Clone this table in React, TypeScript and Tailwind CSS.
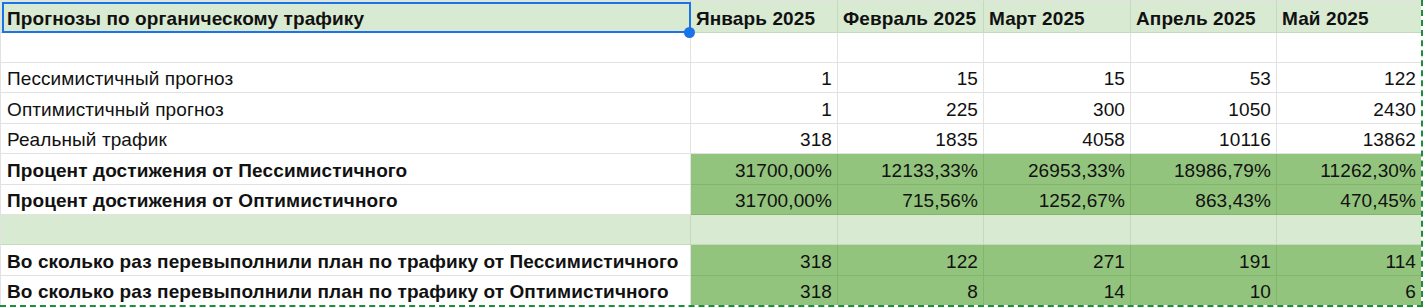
const MONTHS = ["Январь 2025", "Февраль 2025", "Март 2025", "Апрель 2025", "Май 2025"];

type Row = {
  label: string;
  values: string[];
  kind: "header" | "blank" | "plain" | "green" | "light";
  h: string;
};

const ROWS: Row[] = [
  { label: "Прогнозы по органическому трафику", values: MONTHS, kind: "header", h: "h-[33px]" },
  { label: "", values: ["", "", "", "", ""], kind: "blank", h: "h-[30px]" },
  { label: "Пессимистичный прогноз", values: ["1", "15", "15", "53", "122"], kind: "plain", h: "h-[30px]" },
  { label: "Оптимистичный прогноз", values: ["1", "225", "300", "1050", "2430"], kind: "plain", h: "h-[31px]" },
  { label: "Реальный трафик", values: ["318", "1835", "4058", "10116", "13862"], kind: "plain", h: "h-[30px]" },
  {
    label: "Процент достижения от Пессимистичного",
    values: ["31700,00%", "12133,33%", "26953,33%", "18986,79%", "11262,30%"],
    kind: "green",
    h: "h-[31px]",
  },
  {
    label: "Процент достижения от Оптимистичного",
    values: ["31700,00%", "715,56%", "1252,67%", "863,43%", "470,45%"],
    kind: "green",
    h: "h-[30px]",
  },
  { label: "", values: ["", "", "", "", ""], kind: "light", h: "h-[30px]" },
  {
    label: "Во сколько раз перевыполнили план по трафику от Пессимистичного",
    values: ["318", "122", "271", "191", "114"],
    kind: "green",
    h: "h-[31px]",
  },
  {
    label: "Во сколько раз перевыполнили план по трафику от Оптимистичного",
    values: ["318", "8", "14", "10", "6"],
    kind: "green",
    h: "h-[29px]",
  },
];

function labelCell(row: Row, last: boolean) {
  const bg =
    row.kind === "header" || row.kind === "light" ? "bg-[#d9ead3] border-[#c5d9be]" : "bg-white border-[#e2e2e2]";
  const bold = row.kind === "header" || row.kind === "green" ? "font-bold" : "";
  const top = row.kind === "header" ? "border-t border-t-[#e2e2e2]" : "";
  return (
    <div
      className={`${row.h} ${bg} ${bold} ${top} border-l border-l-[#e2e2e2] border-r ${
        last ? "" : "border-b"
      } flex items-end pl-[6px] pb-[3px] whitespace-nowrap overflow-hidden`}
    >
      {row.label}
    </div>
  );
}

function valueCell(row: Row, v: string, i: number, last: boolean) {
  const lastCol = i === 4;
  let bg = "bg-white border-[#e2e2e2]";
  if (row.kind === "header" || row.kind === "light") bg = "bg-[#d9ead3] border-[#c5d9be]";
  if (row.kind === "green") bg = "bg-[#93c47d] border-[#84b56f]";
  const top = row.kind === "header" ? "border-t border-t-[#e2e2e2]" : "";
  const align = row.kind === "header" ? "justify-start pl-[5px] font-bold" : "justify-end pr-[5px]";
  return (
    <div
      key={i}
      className={`${row.h} ${bg} ${top} ${lastCol ? "" : "border-r"} ${
        last ? "" : "border-b"
      } flex items-end pb-[3px] ${align} whitespace-nowrap overflow-hidden`}
    >
      {v}
    </div>
  );
}

export default function App() {
  return (
    <div className="w-[1425px] h-[308px] bg-white relative font-['Liberation_Sans',Arial,sans-serif] text-[19px] leading-[20px] tracking-[0.1px] text-[#111]">
      <div className="w-[1423px] grid grid-cols-[691px_147px_146px_147px_146px_144px] border-r-2 border-b-2 border-dashed border-[#1e8e3e]">
        {ROWS.map((row, r) => {
          const last = r === ROWS.length - 1;
          return [
            <div key={`l${r}`} className="contents">
              {labelCell(row, last)}
            </div>,
            ...row.values.map((v, i) => (
              <div key={`v${r}-${i}`} className="contents">
                {valueCell(row, v, i, last)}
              </div>
            )),
          ];
        })}
      </div>

      {/* selected cell */}
      <div className="absolute left-[2px] top-[2px] w-[689px] h-[31px] border-2 border-[#1a73e8] pointer-events-none" />
      <div className="absolute left-[684px] top-[27px] w-[11px] h-[11px] rounded-full bg-[#1a73e8]" />
    </div>
  );
}
